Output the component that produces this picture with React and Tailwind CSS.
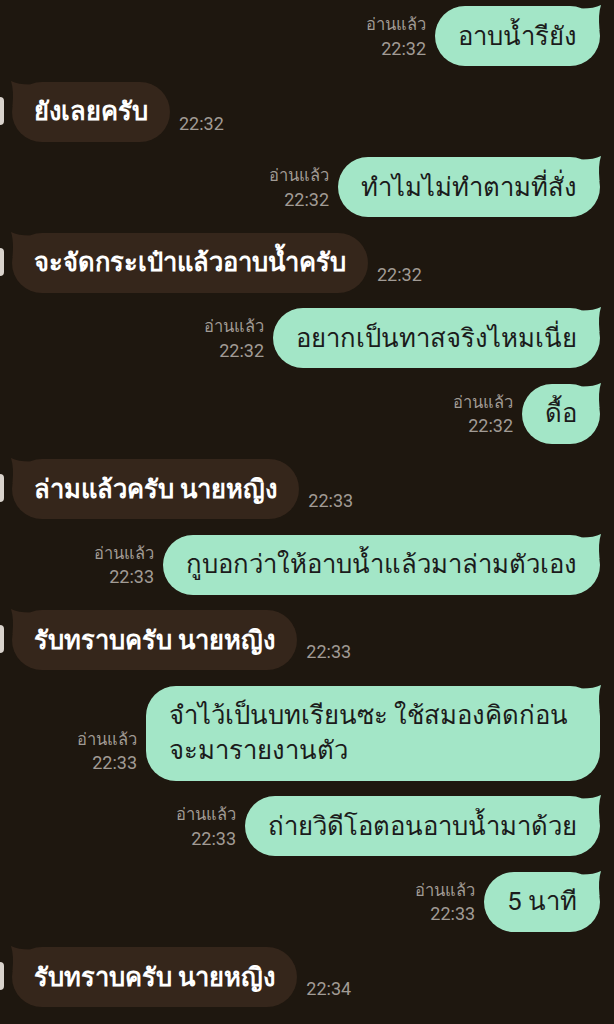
import React from "react";

const FONT = { fontFamily: "Roboto, 'Noto Sans', 'DejaVu Sans', sans-serif" };

function OutTail() {
  return (
    <svg className="absolute right-[-4px] top-[-2px]" width="22" height="26" viewBox="0 0 22 26">
      <path d="M0 4.5 Q12 4.5 19 1 Q16 10 17.5 26 L0 26 Z" fill="#a3e6c7" />
    </svg>
  );
}

function InTail() {
  return (
    <svg className="absolute left-[-4px] top-[-2px] -scale-x-100" width="22" height="26" viewBox="0 0 22 26">
      <path d="M0 4.5 Q12 4.5 19 1 Q16 10 17.5 26 L0 26 Z" fill="#35261b" />
    </svg>
  );
}

function Out({ text, time, wide }) {
  return (
    <div className="flex items-end justify-end pr-[14px]">
      <div className="mr-[9px] mb-[6px] flex flex-col items-end text-[16.5px] leading-[23.5px] text-[#a19b95]">
        <span>อ่านแล้ว</span>
        <span className="text-[18px]">{time}</span>
      </div>
      <div
        className={
          "relative min-w-[78px] rounded-[30px] bg-[#a3e6c7] px-[23px] py-[12.5px] text-center text-[25.7px] leading-[35px] text-[#1b1b1b] " +
          (wide ? "w-[454px] text-left" : "")
        }
      >
        <OutTail />
        <span className="relative">{text}</span>
      </div>
    </div>
  );
}

function In({ text, time }) {
  return (
    <div className="flex items-end">
      <div className="mr-[8px] mt-[15px] h-[28px] w-[4px] self-start rounded-r-full bg-[#d9d3cc]" />
      <div className="relative rounded-[30px] bg-[#35261b] px-[22px] py-[12.5px] text-[25.5px] font-bold leading-[35px] text-white">
        <InTail />
        <span className="relative">{text}</span>
      </div>
      <div className="mb-[7px] ml-[9px] text-[18px] leading-[23px] text-[#a19b95]">{time}</div>
    </div>
  );
}

export default function App() {
  return (
    <div className="min-h-screen w-full overflow-hidden bg-[#1e170f]" style={FONT}>
      <div className="flex flex-col gap-[15.5px] pt-[6px]">
        <Out text="อาบน้ำรียัง" time="22:32" />
        <In text="ยังเลยครับ" time="22:32" />
        <Out text="ทำไมไม่ทำตามที่สั่ง" time="22:32" />
        <In text="จะจัดกระเป๋าแล้วอาบน้ำครับ" time="22:32" />
        <Out text="อยากเป็นทาสจริงไหมเนี่ย" time="22:32" />
        <Out text="ดื้อ" time="22:32" />
        <In text="ล่ามแล้วครับ นายหญิง" time="22:33" />
        <Out text="กูบอกว่าให้อาบน้ำแล้วมาล่ามตัวเอง" time="22:33" />
        <In text="รับทราบครับ นายหญิง" time="22:33" />
        <Out
          wide
          text={
            <>
              จำไว้เป็นบทเรียนซะ ใช้สมองคิดก่อน
              <br />
              จะมารายงานตัว
            </>
          }
          time="22:33"
        />
        <Out text="ถ่ายวิดีโอตอนอาบน้ำมาด้วย" time="22:33" />
        <Out text="5 นาที" time="22:33" />
        <In text="รับทราบครับ นายหญิง" time="22:34" />
      </div>
    </div>
  );
}
